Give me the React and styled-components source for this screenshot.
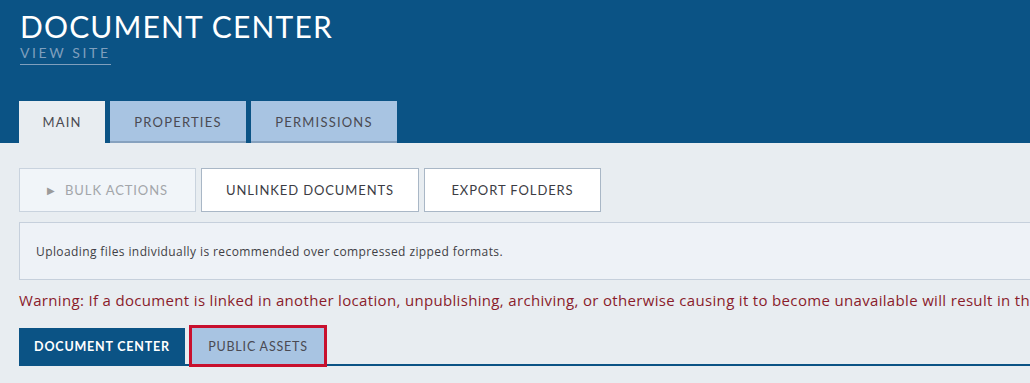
import React from "react"
import styled, { createGlobalStyle } from "styled-components"

const GlobalStyle = createGlobalStyle`
  html, body {
    margin: 0;
    padding: 0;
    background: #e8edf1;
    font-family: "Lato", "Noto Sans", sans-serif;
  }
`

const Page = styled.div`
  width: 1030px;
  height: 383px;
  overflow: hidden;
  background: #e8edf1;
`

const Header = styled.header`
  background: #0b5385;
  height: 143px;
  box-sizing: border-box;
  padding: 8px 0 0 19px;
  display: flex;
  flex-direction: column;
`

const Title = styled.h1`
  margin: 0 0 0 1px;
  color: #fff;
  font-size: 30px;
  line-height: 36px;
  font-weight: 400;
  letter-spacing: 1.15px;
`

const ViewSite = styled.a`
  align-self: flex-start;
  margin-left: 1px;
  margin-top: 1px;
  color: #7f9fbd;
  font-size: 14px;
  line-height: 16px;
  letter-spacing: 2.6px;
  text-decoration: none;
  border-bottom: 1px solid #7f9fbd;
  padding-bottom: 3px;
`

const TabBar = styled.nav`
  margin-top: auto;
  display: flex;
  gap: 5px;
  height: 42px;
`

const Tab = styled.div`
  display: flex;
  align-items: center;
  justify-content: center;
  box-sizing: border-box;
  width: ${(p) => p.$w}px;
  background: ${(p) => (p.$active ? "#e8edf1" : "#a8c4e2")};
  border-bottom: ${(p) => (p.$active ? "none" : "2px solid #87a2bf")};
  padding-top: ${(p) => (p.$active ? 0 : 2)}px;
  color: #4a4a52;
  font-size: 13px;
  letter-spacing: 1.2px;
`

const Body = styled.main`
  padding: 25px 0 0 19px;
`

const ButtonRow = styled.div`
  display: flex;
  gap: 5px;
`

const ActionButton = styled.button`
  width: ${(p) => p.$w}px;
  height: 44px;
  box-sizing: border-box;
  background: ${(p) => (p.$muted ? "#f1f5f9" : "#fff")};
  border: 1px solid ${(p) => (p.$muted ? "#c9d3de" : "#a9b7c6")};
  color: ${(p) => (p.$muted ? "#a3a6aa" : "#3c3c44")};
  font-family: "Lato", "Noto Sans", sans-serif;
  font-size: 13px;
  letter-spacing: 0.9px;
  display: flex;
  align-items: center;
  justify-content: center;
  gap: 10px;
  padding: 0;
`

const Arrow = styled.span`
  color: #9b9b9b;
  font-size: 10px;
  letter-spacing: 0;
`

const InfoBox = styled.div`
  margin-top: 10px;
  height: 58px;
  box-sizing: border-box;
  background: #eef2f7;
  border: 1px solid #c6d0dc;
  border-right: none;
  display: flex;
  align-items: center;
  padding: 1px 0 0 16px;
  color: #3f3f45;
  font-family: "Open Sans", "Noto Sans", sans-serif;
  font-size: 12px;
  letter-spacing: 0.4px;
`

const Warning = styled.p`
  margin: 10px 0 0;
  color: #8a1c2b;
  font-family: "Open Sans", "Noto Sans", sans-serif;
  font-size: 15px;
  line-height: 20px;
  letter-spacing: 0.33px;
  white-space: nowrap;
`

const SubTabs = styled.div`
  margin-top: 18px;
  display: flex;
  gap: 5px;
  border-bottom: 2px solid #0b5385;
  height: 36px;
`

const SubTab = styled.div`
  display: flex;
  align-items: center;
  justify-content: center;
  width: ${(p) => p.$w}px;
  background: ${(p) => (p.$active ? "#0b5385" : "#a8c4e2")};
  color: ${(p) => (p.$active ? "#fff" : "#4a4a52")};
  font-weight: ${(p) => (p.$active ? 700 : 400)};
  font-size: 12.5px;
  letter-spacing: 0.8px;
  outline: ${(p) => (p.$marked ? "3px solid #c8102e" : "none")};
  margin-left: ${(p) => (p.$marked ? 2 : 0)}px;
`

export default function App() {
  return (
    <Page>
      <GlobalStyle />
      <Header>
        <Title>DOCUMENT CENTER</Title>
        <ViewSite href="#">VIEW SITE</ViewSite>
        <TabBar>
          <Tab $active $w={86}>MAIN</Tab>
          <Tab $w={136}>PROPERTIES</Tab>
          <Tab $w={146}>PERMISSIONS</Tab>
        </TabBar>
      </Header>
      <Body>
        <ButtonRow>
          <ActionButton $muted $w={177}>
            <Arrow>▶</Arrow>BULK ACTIONS
          </ActionButton>
          <ActionButton $w={218}>UNLINKED DOCUMENTS</ActionButton>
          <ActionButton $w={177}>EXPORT FOLDERS</ActionButton>
        </ButtonRow>
        <InfoBox>Uploading files individually is recommended over compressed zipped formats.</InfoBox>
        <Warning>
          Warning: If a document is linked in another location, unpublishing, archiving, or otherwise causing it to become unavailable will result in the link being broken.
        </Warning>
        <SubTabs>
          <SubTab $active $w={166}>DOCUMENT CENTER</SubTab>
          <SubTab $marked $w={132}>PUBLIC ASSETS</SubTab>
        </SubTabs>
      </Body>
    </Page>
  )
}
